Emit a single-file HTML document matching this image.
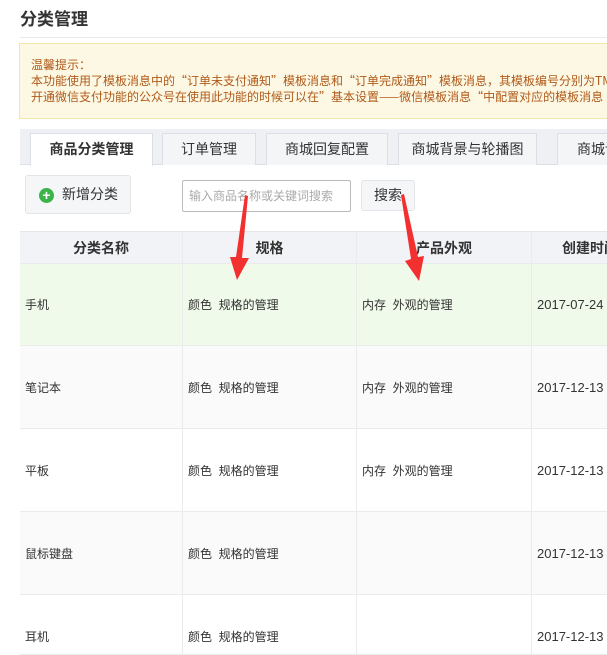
<!DOCTYPE html>
<html><head><meta charset="utf-8"><style>
*{margin:0;padding:0;box-sizing:border-box}
html,body{width:607px;height:655px;overflow:hidden}
body{background:#fff;font-family:"Liberation Sans","Noto Sans CJK SC",sans-serif;color:#333;position:relative}
.a{position:absolute}
.t{font-size:17px;left:20px;top:5px;color:#333;font-weight:bold}
.hr{left:20px;top:37px;width:587px;height:1px;background:#e9e9e9}
.note{left:19px;top:43px;width:588px;height:76px;background:#fcf8e3;border:1px solid #f2e6a9;border-right:none;font-size:12px;color:#b05a1a;padding:13px 0 0 11px;line-height:16px;white-space:nowrap;overflow:hidden;font-family:"Noto Sans CJK SC",sans-serif}
.tabbar{left:20px;top:129px;width:587px;height:36px;background:#eef0f3;border-bottom:1px solid #dcdfe6}
.tab{top:133px;height:32px;background:#f4f5f7;border:1px solid #dcdfe6;border-bottom:none;font-size:14px;text-align:center;line-height:31px;color:#333;white-space:nowrap;overflow:hidden}
.tab.on{background:#fff;font-weight:bold;height:33px}
.btn{left:25px;top:175px;width:106px;height:39px;background:#f5f6f8;border:1px solid #e2e4e8;border-radius:3px;font-size:14px;line-height:37px;padding-left:36px}
.plus{left:13px;top:12px;width:15px;height:15px;border-radius:50%;background:#3cb44a;color:#fff;font-weight:bold;font-size:14px;line-height:15px;text-align:center;padding:0}
.inp{left:182px;top:180px;width:169px;height:32px;border:1px solid #bbb;border-radius:2px;font-size:12px;color:#aaa;line-height:30px;padding-left:6px}
.sb{left:361px;top:180px;width:54px;height:31px;background:#f5f6f8;border:1px solid #e2e4e8;border-radius:3px;font-size:14px;text-align:center;line-height:29px}
.row{left:20px;width:587px;border-bottom:1px solid #ebebeb;font-size:12px;overflow:hidden}
.c{position:absolute;top:0;bottom:0;border-left:1px solid #ebebeb;display:flex;align-items:center;padding-left:5px;white-space:nowrap}
.d{font-size:13px;width:76px;overflow:hidden}
.hd .c{justify-content:center;font-weight:bold;font-size:14px;padding:0}
</style></head><body>
<div class="a t">分类管理</div>
<div class="a hr"></div>
<div class="a note">温馨提示：<br>本功能使用了模板消息中的“订单未支付通知”模板消息和“订单完成通知”模板消息，其模板编号分别为TM00000000<br>开通微信支付功能的公众号在使用此功能的时候可以在”基本设置——微信模板消息“中配置对应的模板消息</div>
<div class="a tabbar"></div>
<div class="a tab on" style="left:30px;width:123px">商品分类管理</div>
<div class="a tab" style="left:162px;width:94px">订单管理</div>
<div class="a tab" style="left:266px;width:122px">商城回复配置</div>
<div class="a tab" style="left:398px;width:139px">商城背景与轮播图</div>
<div class="a tab" style="left:557px;width:50px;text-align:left;padding-left:19px;border-right:none">商城设置</div>
<div class="a btn"><div class="a plus">+</div>新增分类</div>
<div class="a inp">输入商品名称或关键词搜索</div>
<div class="a sb">搜索</div>

<div class="a row hd" style="top:231px;height:33px;background:#f2f3f7;border-top:1px solid #e6e6e6">
<div class="c" style="left:0;width:162px;border-left:none">分类名称</div>
<div class="c" style="left:162px;width:174px">规格</div>
<div class="c" style="left:336px;width:175px">产品外观</div>
<div class="c" style="left:511px;width:76px;justify-content:flex-start;padding-left:30px;overflow:hidden">创建时间</div>
</div>
<div class="a row" style="top:264px;height:82px;background:#effaea">
<div class="c" style="left:0;border-left:none">手机</div><div class="c" style="left:162px">颜色&nbsp; 规格的管理</div><div class="c" style="left:336px">内存&nbsp; 外观的管理</div><div class="c d" style="left:511px">2017-07-24</div></div>
<div class="a row" style="top:346px;height:83px;background:#fafafa">
<div class="c" style="left:0;border-left:none">笔记本</div><div class="c" style="left:162px">颜色&nbsp; 规格的管理</div><div class="c" style="left:336px">内存&nbsp; 外观的管理</div><div class="c d" style="left:511px">2017-12-13</div></div>
<div class="a row" style="top:429px;height:83px;background:#fff">
<div class="c" style="left:0;border-left:none">平板</div><div class="c" style="left:162px">颜色&nbsp; 规格的管理</div><div class="c" style="left:336px">内存&nbsp; 外观的管理</div><div class="c d" style="left:511px">2017-12-13</div></div>
<div class="a row" style="top:512px;height:83px;background:#fafafa">
<div class="c" style="left:0;border-left:none">鼠标键盘</div><div class="c" style="left:162px">颜色&nbsp; 规格的管理</div><div class="c" style="left:336px"></div><div class="c d" style="left:511px">2017-12-13</div></div>
<div class="a row" style="top:595px;height:60px;background:#fff">
<div class="c" style="left:0;border-left:none;bottom:auto;height:83px">耳机</div><div class="c" style="left:162px;bottom:auto;height:83px">颜色&nbsp; 规格的管理</div><div class="c" style="left:336px;bottom:auto;height:83px"></div><div class="c d" style="left:511px;bottom:auto;height:83px">2017-12-13</div></div>

<svg class="a" style="left:0;top:0" width="607" height="655">
<g fill="#f23030">
<polygon points="245,195 248,196 242,258 249,258 237,280 230,257 236,257"/>
<polygon points="401,195 404,194 418,257 424,256 419,281 405,261 411,259"/>
</g>
</svg>
</body></html>
